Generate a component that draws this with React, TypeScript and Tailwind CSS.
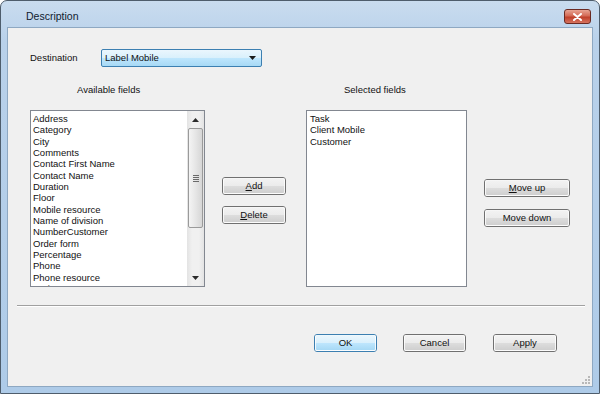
import React from "react"

const AVAILABLE = [
  "Address",
  "Category",
  "City",
  "Comments",
  "Contact First Name",
  "Contact Name",
  "Duration",
  "Floor",
  "Mobile resource",
  "Name of division",
  "NumberCustomer",
  "Order form",
  "Percentage",
  "Phone",
  "Phone resource",
  "Project",
  "Region",
]

const SELECTED = ["Task", "Client Mobile", "Customer"]

function Button({
  children,
  className = "",
  primary = false,
}: {
  children: React.ReactNode
  className?: string
  primary?: boolean
}) {
  return (
    <div
      className={`h-[18px] rounded-[3px] border ${
        primary ? "border-[#3c7fb1]" : "border-[#707070]"
      } ${className}`}
    >
      <div
        className={`h-full w-full rounded-[2px] border border-white/80 flex items-center justify-center leading-none ${
          primary
            ? "bg-[linear-gradient(#eaf6fd_0%,#d9f0fc_50%,#bee6fd_51%,#a7d9f5_100%)]"
            : "bg-[linear-gradient(#f2f2f2_0%,#ebebeb_50%,#dddddd_51%,#cfcfcf_100%)]"
        }`}
      >
        {children}
      </div>
    </div>
  )
}

function ScrollArrow({ up }: { up?: boolean }) {
  return (
    <div className="h-[17px] flex items-center justify-center">
      <svg width="7" height="4" viewBox="0 0 7 4">
        {up ? <path d="M3.5 0 L7 4 L0 4 Z" fill="#2b2b2b" /> : <path d="M0 0 L7 0 L3.5 4 Z" fill="#2b2b2b" />}
      </svg>
    </div>
  )
}

function Scrollbar() {
  return (
    <div className="w-[17px] h-full flex flex-col bg-[linear-gradient(90deg,#e3e3e3,#f0f0f0_30%,#f0f0f0_70%,#e3e3e3)]">
      <ScrollArrow up />
      <div className="flex-1 px-[1px]">
        <div className="h-[100px] rounded-[2px] border border-[#9a9a9a] bg-[linear-gradient(90deg,#f4f4f4,#e6e6e6_50%,#d6d6d6)] flex flex-col items-center justify-center gap-[1px]">
          <div className="w-[6px] h-[1px] bg-[#6a6a6a]" />
          <div className="w-[6px] h-[1px] bg-[#6a6a6a]" />
          <div className="w-[6px] h-[1px] bg-[#6a6a6a]" />
          <div className="w-[6px] h-[1px] bg-[#6a6a6a]" />
        </div>
      </div>
      <ScrollArrow />
    </div>
  )
}

function ListBox({
  items,
  className = "",
  scroll = false,
  padLeft = "pl-[2px]",
}: {
  items: string[]
  className?: string
  scroll?: boolean
  padLeft?: string
}) {
  return (
    <div className={`h-[177px] border border-[#828790] bg-white flex overflow-hidden ${className}`}>
      <div className={`flex-1 pt-[2px] ${padLeft} overflow-hidden`}>
        {items.map((it) => (
          <div key={it} className="leading-[11.35px] whitespace-nowrap">
            {it}
          </div>
        ))}
      </div>
      {scroll && <Scrollbar />}
    </div>
  )
}

export default function App() {
  return (
    <div className="w-[600px] h-[394px] flex flex-col border border-[#4e5d6c] rounded-t-[7px] bg-[linear-gradient(#c9dcef,#b9d1ea_40px,#aecbe8)] font-['Liberation_Sans',Arial,sans-serif] text-[9.5px] text-[#111] overflow-hidden">
      {/* title bar */}
      <div className="h-[26px] flex items-start">
        <div className="ml-[25px] mt-[9px] leading-[13px] text-[10.5px] text-[#10202f]">Description</div>
        <div className="ml-auto mr-[8px] mt-[8px] w-[27px] h-[15px] rounded-[3px] border border-[#6b2a22] bg-[linear-gradient(#e8a493,#d46a55_45%,#c0402a_55%,#d5735f)] flex items-center justify-center">
          <svg width="9" height="8" viewBox="0 0 9 8">
            <path d="M1 1 L8 7 M8 1 L1 7" stroke="#ffffff" strokeWidth="2" strokeLinecap="round" />
          </svg>
        </div>
      </div>

      {/* client area */}
      <div className="relative flex-1 mx-[6px] mb-[6px] border border-[#8ea8c2] bg-[#f0f0f0] flex flex-col">
        <div className="mt-[21px] pl-[22px] flex items-center h-[18px]">
          <div className="w-[71px]">Destination</div>
          <div className="w-[161px] h-[18px] rounded-[2px] border border-[#3c7fb1] bg-[linear-gradient(#eaf6fd,#d9f0fc_50%,#bee6fd_51%,#a7d9f5)] flex items-center pl-[3px] pr-[5px]">
            <span className="flex-1 leading-none">Label Mobile</span>
            <svg width="7" height="4" viewBox="0 0 7 4">
              <path d="M0 0 L7 0 L3.5 4 Z" fill="#1a1a1a" />
            </svg>
          </div>
        </div>

        <div className="mt-[16px] h-[14px] leading-[14px] flex">
          <div className="w-[336px] pl-[69px]">Available fields</div>
          <div>Selected fields</div>
        </div>

        <div className="mt-[13px] pl-[22px] flex">
          <ListBox items={AVAILABLE} scroll className="w-[175px]" />
          <div className="ml-[17px] w-[64px] pt-[67px] flex flex-col gap-[11px]">
            <Button>
              <span>
                <u className="underline-offset-1">A</u>dd
              </span>
            </Button>
            <Button>
              <span>
                <u className="underline-offset-1">D</u>elete
              </span>
            </Button>
          </div>
          <ListBox items={SELECTED} className="ml-[20px] w-[161px]" padLeft="pl-[3px]" />
          <div className="ml-[17px] w-[86px] pt-[69px] flex flex-col gap-[12px]">
            <Button>
              <span>
                <u className="underline-offset-1">M</u>ove up
              </span>
            </Button>
            <Button>Move down</Button>
          </div>
        </div>

        <div className="mt-[18px] ml-[9px] mr-[7px] border-t border-[#a0a0a0] border-b border-b-white" />

        <div className="mt-[27px] pl-[306px] flex">
          <Button primary className="w-[63px]">
            OK
          </Button>
          <Button className="ml-[26px] w-[63px]">Cancel</Button>
          <Button className="ml-[27px] w-[64px]">Apply</Button>
        </div>

        {/* resize grip */}
        <div className="absolute right-[2px] bottom-[2px] grid grid-cols-3 gap-[1px] w-[8px] h-[8px]">
          <span />
          <span />
          <span className="w-[2px] h-[2px] bg-[#b8b8b8]" />
          <span />
          <span className="w-[2px] h-[2px] bg-[#b8b8b8]" />
          <span className="w-[2px] h-[2px] bg-[#b8b8b8]" />
          <span className="w-[2px] h-[2px] bg-[#b8b8b8]" />
          <span className="w-[2px] h-[2px] bg-[#b8b8b8]" />
          <span className="w-[2px] h-[2px] bg-[#b8b8b8]" />
        </div>
      </div>
    </div>
  )
}
